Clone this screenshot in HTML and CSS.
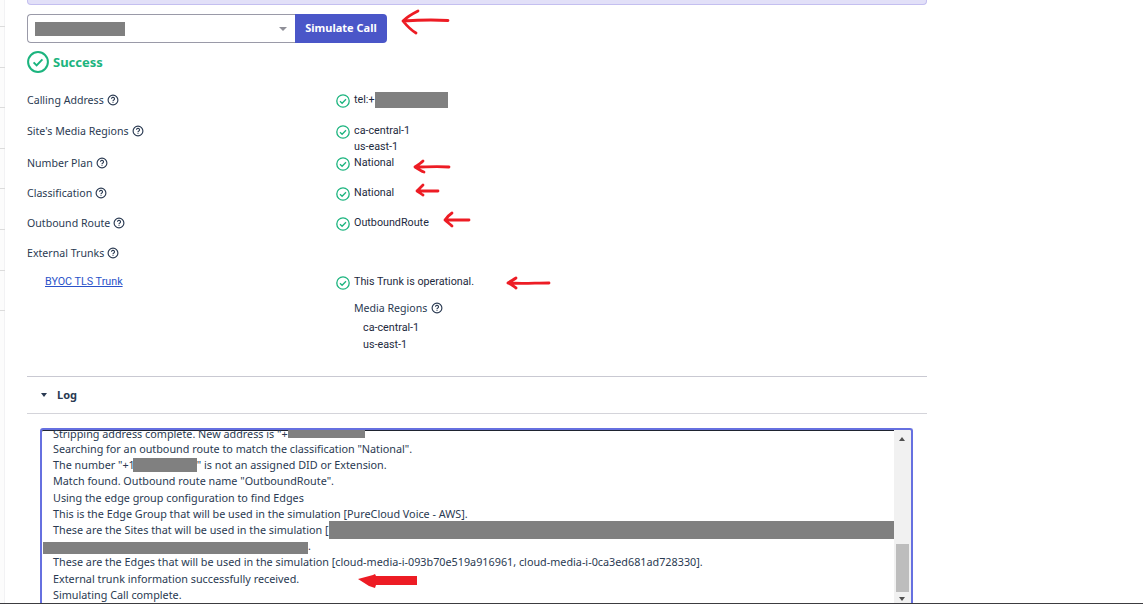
FILE: index.html
```html
<!DOCTYPE html>
<html lang="en">
<head>
<meta charset="utf-8">
<title>Simulate Call</title>
<link rel="stylesheet" href="styles.css">
</head>
<body>
<div class="rail"><i></i><i></i><i></i><i></i><i></i><i></i><i></i><i></i></div>
<main class="panel">
  <div class="banner"></div>
  <div class="sim">
    <div class="select"><span class="redact r-select"></span><span class="caret"></span></div>
    <button class="btn">Simulate Call</button>
  </div>
  <div class="success">
    <svg class="big" viewBox="0 0 22 22"><circle cx="11" cy="11" r="9.9"/><path d="M6.6 11.4l3 3 5.8-6"/></svg>
    <span>Success</span>
  </div>
  <div class="results">
    <div class="row r1">
      <div class="label">Calling Address <svg class="q" viewBox="0 0 12 12"><circle cx="6" cy="6" r="4.9"/><path d="M4.5 4.8a1.5 1.5 0 1 1 2.3 1.3c-.5.3-.8.6-.8 1.1"/><path d="M6 8.2v.7"/></svg></div>
      <div class="value"><svg class="ok" viewBox="0 0 14 14"><circle cx="7" cy="7" r="6.2"/><path d="M4 7.2l2.1 2.1 3.9-4"/></svg><div>tel:+<span class="redact r-tel"></span></div></div>
    </div>
    <div class="row r2">
      <div class="label">Site's Media Regions <svg class="q" viewBox="0 0 12 12"><circle cx="6" cy="6" r="4.9"/><path d="M4.5 4.8a1.5 1.5 0 1 1 2.3 1.3c-.5.3-.8.6-.8 1.1"/><path d="M6 8.2v.7"/></svg></div>
      <div class="value"><svg class="ok" viewBox="0 0 14 14"><circle cx="7" cy="7" r="6.2"/><path d="M4 7.2l2.1 2.1 3.9-4"/></svg><div><div>ca-central-1</div><div>us-east-1</div></div></div>
    </div>
    <div class="row r3">
      <div class="label">Number Plan <svg class="q" viewBox="0 0 12 12"><circle cx="6" cy="6" r="4.9"/><path d="M4.5 4.8a1.5 1.5 0 1 1 2.3 1.3c-.5.3-.8.6-.8 1.1"/><path d="M6 8.2v.7"/></svg></div>
      <div class="value"><svg class="ok" viewBox="0 0 14 14"><circle cx="7" cy="7" r="6.2"/><path d="M4 7.2l2.1 2.1 3.9-4"/></svg><div>National</div></div>
    </div>
    <div class="row r4">
      <div class="label">Classification <svg class="q" viewBox="0 0 12 12"><circle cx="6" cy="6" r="4.9"/><path d="M4.5 4.8a1.5 1.5 0 1 1 2.3 1.3c-.5.3-.8.6-.8 1.1"/><path d="M6 8.2v.7"/></svg></div>
      <div class="value"><svg class="ok" viewBox="0 0 14 14"><circle cx="7" cy="7" r="6.2"/><path d="M4 7.2l2.1 2.1 3.9-4"/></svg><div>National</div></div>
    </div>
    <div class="row r5">
      <div class="label">Outbound Route <svg class="q" viewBox="0 0 12 12"><circle cx="6" cy="6" r="4.9"/><path d="M4.5 4.8a1.5 1.5 0 1 1 2.3 1.3c-.5.3-.8.6-.8 1.1"/><path d="M6 8.2v.7"/></svg></div>
      <div class="value"><svg class="ok" viewBox="0 0 14 14"><circle cx="7" cy="7" r="6.2"/><path d="M4 7.2l2.1 2.1 3.9-4"/></svg><div>OutboundRoute</div></div>
    </div>
    <div class="row r6">
      <div class="label">External Trunks <svg class="q" viewBox="0 0 12 12"><circle cx="6" cy="6" r="4.9"/><path d="M4.5 4.8a1.5 1.5 0 1 1 2.3 1.3c-.5.3-.8.6-.8 1.1"/><path d="M6 8.2v.7"/></svg></div>
    </div>
    <div class="row r7">
      <div class="label trunk"><a href="#">BYOC TLS Trunk</a></div>
      <div class="value"><svg class="ok" viewBox="0 0 14 14"><circle cx="7" cy="7" r="6.2"/><path d="M4 7.2l2.1 2.1 3.9-4"/></svg><div>
        <div>This Trunk is operational.</div>
        <div class="regions">Media Regions <svg class="q" viewBox="0 0 12 12"><circle cx="6" cy="6" r="4.9"/><path d="M4.5 4.8a1.5 1.5 0 1 1 2.3 1.3c-.5.3-.8.6-.8 1.1"/><path d="M6 8.2v.7"/></svg></div>
        <div class="region-list"><div>ca-central-1</div><div>us-east-1</div></div>
      </div></div>
    </div>
  </div>
  <div class="log-head"><span class="tri"></span>Log</div>
  <div class="log">
    <div class="log-text">
      <p class="first">Stripping address complete. New address is "+<span class="redact r-a"></span></p>
      <p>Searching for an outbound route to match the classification "National".</p>
      <p>The number "+1<span class="redact r-b"></span>" is not an assigned DID or Extension.</p>
      <p>Match found. Outbound route name "OutboundRoute".</p>
      <p>Using the edge group configuration to find Edges</p>
      <p>This is the Edge Group that will be used in the simulation [PureCloud Voice - AWS].</p>
      <p>These are the Sites that will be used in the simulation [<span class="redact r-c"></span></p>
      <p class="wrapped"><span class="redact r-d"></span>.</p>
      <p>These are the Edges that will be used in the simulation [cloud-media-i-093b70e519a916961, cloud-media-i-0ca3ed681ad728330].</p>
      <p>External trunk information successfully received.</p>
      <p>Simulating Call complete.</p>
    </div>
    <div class="scroll">
      <span class="up"></span>
      <span class="thumb"></span>
      <span class="down"></span>
    </div>
  </div>
</main>
<div class="baseline"></div>
<svg class="marks" viewBox="0 0 1143 604">
  <path class="m3" d="M448 20.500C432 19.500 418 20 403 21M403 21c4-4 9-7 15-10M403 21c4 5 8 9 13 12"/>
  <path class="m3" d="M449 167C437 166 426 167 415 167M415 167c3-2 6-4 8-6M415 167c3 2 6 4 9 5"/>
  <path class="m3" d="M438 191C431 191 424 191 417 191M417 191c2-2 4-4 6-6M417 191c2 1 4 3 6 4"/>
  <path class="m3" d="M469 220C461 220 453 220 445 220M445 220c2-3 4-5 7-7M445 220c2 2 5 4 7 6"/>
  <path class="m3" d="M549 283C535 283 521 284 508 283M508 283c3-2 5-3 8-5M508 283c3 1 5 3 8 5"/>
  <path class="fill" d="M358 579l15-4 2-1 1 2h41v9h-41l-1 3-6-2z"/>
</svg>
</body>
</html>
```
FILE: styles.css
```css
* { box-sizing: border-box; }
html, body { margin: 0; height: 604px; overflow: hidden; background: #fff; }
body { position: relative; font-family: "Noto Sans", sans-serif; font-size: 10.6px; color: #2a3a52; }

.rail { position: absolute; left: 0; top: 0; bottom: 0; width: 5px; padding-top: 26px; display: flex; flex-direction: column; gap: 39.6px; background: #fcfcfc; border-right: 1px solid #f2f2f4; }
.rail i { display: block; height: 1px; width: 5px; flex: none; background: #dcdcdc; }

.panel { width: 900px; margin-left: 27px; }

.banner { height: 5px; background: #e2e0f8; border: 1px solid #c4bff0; border-top: 0; border-radius: 0 0 4px 4px; }

.sim { display: flex; margin-top: 9px; height: 29px; }
.select { width: 268px; display: flex; align-items: center; justify-content: space-between; padding: 0 7px 0 7px; border: 1px solid #9a9aa8; border-right: 0; border-radius: 4px 0 0 4px; }
.redact { display: inline-block; background: #808080; vertical-align: top; }
.r-select { width: 90px; height: 14px; }
.caret { width: 0; height: 0; border-left: 4px solid transparent; border-right: 4px solid transparent; border-top: 4px solid #8f8f98; margin-right: 1px; }
.btn { width: 92px; height: 29px; padding: 0 0 3px; border: 0; border-radius: 0 4px 4px 0; background: #4a56c8; color: #fff; font: 700 11px "Noto Sans", sans-serif; }

.success { display: flex; align-items: center; gap: 4px; margin-top: 7px; height: 24px; color: #1bb47e; font-size: 13px; font-weight: 700; }
svg.big { width: 22px; height: 22px; fill: none; stroke: #1bb47e; stroke-width: 2; }

.results { margin-top: 18px; height: 285px; border-bottom: 1px solid #c9c9d2; }
.row { display: flex; }
.label { width: 309px; display: flex; align-items: center; gap: 3px; height: 16px; white-space: nowrap; }
.value { display: flex; gap: 4px; font-family: Roboto, sans-serif; font-size: 10.75px; color: #1d2a3e; line-height: 16px; }
.trunk { padding-left: 18px; font-family: Roboto, sans-serif; font-size: 10.75px; }
.trunk a { color: #2a52c9; }
svg.q { width: 12px; height: 12px; fill: none; stroke: #2a3a52; stroke-width: 1.15; flex: none; }
svg.ok { width: 14px; height: 14px; margin-top: 2px; fill: none; stroke: #1bb47e; stroke-width: 1.3; flex: none; }

.r2 { margin-top: 15px; }
.r3 { margin-top: 0; }
.r4, .r5, .r6 { margin-top: 14px; }
.r7 { margin-top: 12px; }
.r7 .value { margin-top: 1px; }
.r-tel { width: 73px; height: 16px; }
.regions { display: flex; align-items: center; gap: 4px; margin-top: 10px; height: 16px; font-family: "Noto Sans", sans-serif; font-size: 10.6px; color: #2a3a52; }
.region-list { padding-left: 9px; margin-top: 3px; line-height: 17px; }

.log-head { display: flex; align-items: center; height: 37px; padding-bottom: 2px; border-bottom: 1px solid #d4d4da; font-size: 11px; font-weight: 700; color: #2a3a52; }
.tri { width: 0; height: 0; margin: 1px 10px 0 14px; border-left: 3px solid transparent; border-right: 3px solid transparent; border-top: 4px solid #2a3a52; }

.log { display: flex; width: 873px; height: 176px; margin: 14px 0 0 13px; border: 2px solid #6670e0; border-bottom: 0; border-radius: 3px 3px 0 0; overflow: hidden; box-shadow: inset 0 1px 0 #1f2430; }
.log-text { flex: 1; min-width: 0; padding-left: 11px; font-size: 10.8px; color: #2a3a52; line-height: 16px; overflow: hidden; }
.log-text p { margin: 0; height: 16.2px; white-space: nowrap; }
.log-text .first { height: 15px; margin-top: -4px; }
.r-a { width: 77px; height: 8px; margin-top: 4px; }
.r-b { width: 64px; height: 14px; margin-top: 1px; margin-left: -2px; }
.r-c { width: 565px; height: 18px; margin-top: -1px; }
.wrapped { margin-left: -10px !important; }
.r-d { width: 265px; height: 12px; margin-top: 4px; }

.scroll { position: relative; width: 17px; background: #f1f1f1; flex: none; }
.up, .down { position: absolute; left: 5px; width: 0; height: 0; border-left: 3.5px solid transparent; border-right: 3.5px solid transparent; }
.up { top: 7px; border-bottom: 4px solid #505050; }
.down { bottom: 3px; border-top: 4px solid #505050; }
.thumb { position: absolute; left: 2px; right: 2px; top: 114px; height: 48px; background: #bdbdbd; }

.baseline { position: absolute; left: 0; right: 0; top: 603px; height: 1px; background: #3c3c40; }

.marks { position: absolute; left: 0; top: 0; width: 1143px; height: 604px; pointer-events: none; }
.m3 { fill: none; stroke: #ed1c24; stroke-width: 2.8; stroke-linecap: round; }
.fill { fill: #ed1c24; }
```
